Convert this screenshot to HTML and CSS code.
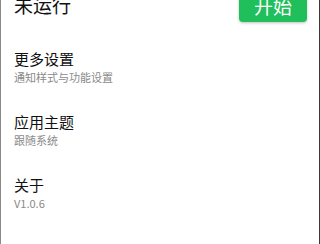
FILE: index.html
```html
<!DOCTYPE html>
<html lang="zh-CN">
<head>
    <meta charset="UTF-8">
    <meta name="viewport" content="width=device-width, initial-scale=1.0">
    <title>设置</title>
    <link rel="stylesheet" href="styles.css">
</head>
<body>
    <div class="screen">
        <div class="status-bar">
            <span class="status-text">未运行</span>
            <button class="start-btn" type="button">开始</button>
        </div>

        <ul class="settings">
            <li class="setting-item">
                <div class="setting-title">更多设置</div>
                <div class="setting-desc">通知样式与功能设置</div>
            </li>
            <li class="setting-item">
                <div class="setting-title">应用主题</div>
                <div class="setting-desc">跟随系统</div>
            </li>
            <li class="setting-item">
                <div class="setting-title">关于</div>
                <div class="setting-desc">V1.0.6</div>
            </li>
        </ul>
    </div>
</body>
</html>
```

FILE: styles.css
```css
html, body {
    margin: 0;
    padding: 0;
    background-color: #ffffff;
}

body {
    font-family: "Noto Sans CJK SC", "Noto Sans", sans-serif;
    color: #111111;
    overflow: hidden;
}

.screen {
    height: 244px;
    box-sizing: border-box;
    border-left: 1px solid #8a8a8a;
    border-right: 1px solid #3a3a3a;
    overflow: hidden;
}

.status-bar {
    display: flex;
    justify-content: space-between;
    align-items: flex-end;
    margin-top: -10px;
    padding: 0 12px 0 13px;
}

.status-text {
    font-size: 19px;
    line-height: 22px;
    margin-bottom: 6px;
}

.start-btn {
    width: 68px;
    height: 32px;
    padding: 0 0 1px;
    border: none;
    border-radius: 4px;
    background-color: #20bf5b;
    color: #ffffff;
    font-family: inherit;
    font-size: 19px;
    line-height: 28px;
    box-shadow: 0 1px 3px rgba(0, 0, 0, 0.25);
}

.settings {
    list-style: none;
    margin: 0;
    padding: 0;
    margin-top: 14px;
}

.setting-item {
    padding: 13px 14px 14px 13px;
}

.setting-title {
    font-size: 15px;
    line-height: 20px;
    color: #111111;
}

.setting-desc {
    font-size: 11px;
    line-height: 16px;
    color: #8a8a8a;
}
```
